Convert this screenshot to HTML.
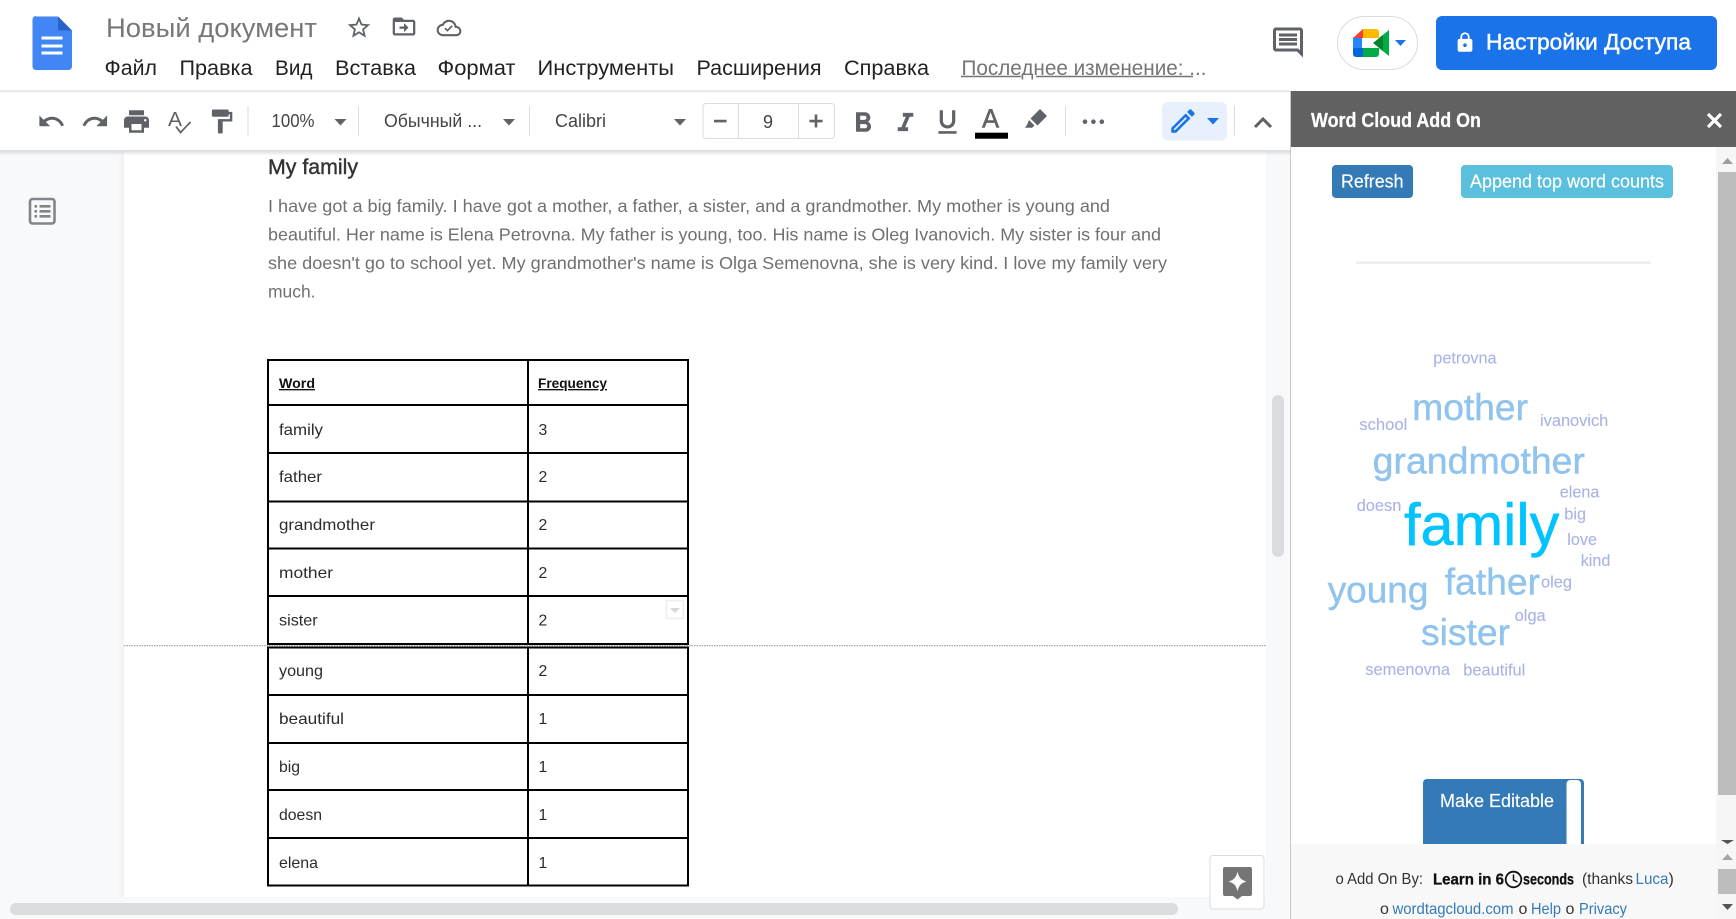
<!DOCTYPE html>
<html lang="ru">
<head>
<meta charset="utf-8">
<title>Новый документ</title>
<style>
html,body{margin:0;padding:0;width:1736px;height:919px;overflow:hidden;background:#fff}
svg{display:block}
text{font-family:"Liberation Sans",Arial,sans-serif;white-space:pre}
.i{fill:#5f6368}
</style>
</head>
<body>
<svg xmlns="http://www.w3.org/2000/svg" width="1736" height="919" viewBox="0 0 1736 919">
<defs>
<linearGradient id="sh" x1="0" y1="0" x2="0" y2="1"><stop offset="0" stop-color="#d8d9db"/><stop offset="1" stop-color="#d8d9db" stop-opacity="0"/></linearGradient>
<linearGradient id="shl" x1="0" y1="0" x2="1" y2="0"><stop offset="0" stop-color="#000" stop-opacity="0"/><stop offset="1" stop-color="#000" stop-opacity=".035"/></linearGradient>
</defs>

<!-- canvas background -->
<rect x="0" y="150" width="1291" height="769" fill="#f8f9fa"/>
<rect x="118" y="150" width="6" height="747" fill="url(#shl)"/>
<rect x="124" y="150" width="1142" height="747" fill="#fff"/>

<!-- document -->
<text x="268" y="174" font-size="21" fill="#333" stroke="#333" stroke-width=".4" textLength="90" lengthAdjust="spacingAndGlyphs">My family</text>
<g font-size="17.6" fill="#707070">
<text x="268" y="212" textLength="842" lengthAdjust="spacingAndGlyphs">I have got a big family. I have got a mother, a father, a sister, and a grandmother. My mother is young and</text>
<text x="268" y="240.5" textLength="893" lengthAdjust="spacingAndGlyphs">beautiful. Her name is Elena Petrovna. My father is young, too. His name is Oleg Ivanovich. My sister is four and</text>
<text x="268" y="269" textLength="899" lengthAdjust="spacingAndGlyphs">she doesn't go to school yet. My grandmother's name is Olga Semenovna, she is very kind. I love my family very</text>
<text x="268" y="297.5" textLength="47.5" lengthAdjust="spacingAndGlyphs">much.</text>
</g>

<!-- table -->
<g fill="none" stroke="#000" stroke-width="2">
<rect x="268" y="360" width="420" height="284"/>
<path d="M528 360V644M268 405H688M268 453H688M268 501.5H688M268 548.5H688M268 596H688"/>
<rect x="268" y="647.5" width="420" height="238"/>
<path d="M528 647.5V885.5M268 695H688M268 743H688M268 790H688M268 838H688"/>
</g>
<line x1="124" y1="645.7" x2="1266" y2="645.7" stroke="#9a9a9a" stroke-width="1.2" stroke-dasharray="1.5 1"/>
<g font-size="15.8" fill="#2c2c2c">
<text x="279" y="388" font-weight="700" font-size="13.5" fill="#111" text-decoration="underline" textLength="36" lengthAdjust="spacingAndGlyphs">Word</text>
<text x="538" y="388" font-weight="700" font-size="13.5" fill="#111" text-decoration="underline" textLength="69" lengthAdjust="spacingAndGlyphs">Frequency</text>
<text x="279" y="435" textLength="44" lengthAdjust="spacingAndGlyphs">family</text>
<text x="279" y="482" textLength="43" lengthAdjust="spacingAndGlyphs">father</text>
<text x="279" y="530" textLength="96" lengthAdjust="spacingAndGlyphs">grandmother</text>
<text x="279" y="578" textLength="54" lengthAdjust="spacingAndGlyphs">mother</text>
<text x="279" y="625.5" textLength="38.7" lengthAdjust="spacingAndGlyphs">sister</text>
<text x="279" y="676" textLength="44" lengthAdjust="spacingAndGlyphs">young</text>
<text x="279" y="724" textLength="65" lengthAdjust="spacingAndGlyphs">beautiful</text>
<text x="279" y="772" textLength="21" lengthAdjust="spacingAndGlyphs">big</text>
<text x="279" y="820" textLength="43" lengthAdjust="spacingAndGlyphs">doesn</text>
<text x="279" y="868" textLength="39" lengthAdjust="spacingAndGlyphs">elena</text>
<text x="538.5" y="435">3</text><text x="538.5" y="482">2</text><text x="538.5" y="530">2</text><text x="538.5" y="578">2</text><text x="538.5" y="625.5">2</text><text x="538.5" y="676">2</text><text x="538.5" y="724">1</text><text x="538.5" y="772">1</text><text x="538.5" y="820">1</text><text x="538.5" y="868">1</text>
</g>
<rect x="666.5" y="600.5" width="17" height="18" fill="#fff" stroke="#eee" stroke-width="1.5" rx="1"/>
<path d="M670 608h10l-5 5z" fill="#d8d8d8"/>

<!-- outline icon -->
<rect x="30" y="199" width="24.5" height="24.5" rx="2.5" fill="none" stroke="#80868b" stroke-width="2.6"/>
<path d="M34.5 205h2.6v2.6h-2.6zM34.5 210h2.6v2.6h-2.6zM34.5 215h2.6v2.6h-2.6zM39.5 205h11v2.6h-11zM39.5 210h11v2.6h-11zM39.5 215h11v2.6h-11z" fill="#80868b"/>

<!-- doc scrollbars -->
<rect x="1272" y="395" width="12" height="162" rx="6" fill="#dadce0"/>
<rect x="0" y="902.7" width="1291" height="16.3" fill="#f8f9fa"/>
<rect x="10" y="903" width="1168" height="12" rx="6" fill="#dadce0"/>

<!-- explore button -->
<rect x="1210" y="855.5" width="54" height="53.5" rx="3" fill="#fff" stroke="#dcdcdc"/>
<path d="M1225 867h25a2 2 0 0 1 2 2v25a2 2 0 0 1-2 2h-8l-4.500 3.500-4.500-3.500h-8a2 2 0 0 1-2-2v-25a2 2 0 0 1 2-2z" fill="#757575"/>
<path d="M1237.500 871.500c1 5.500 3.500 8.500 9 10-5.500 1.500-8 4.500-9 10-1-5.500-3.500-8.500-9-10 5.500-1.500 8-4.500 9-10z" fill="#fff"/>

<!-- top header -->
<rect x="0" y="0" width="1736" height="91" fill="#fff"/>
<path d="M36 16.500h22l14 14v36a3.500 3.500 0 0 1-3.500 3.500h-32.500a3.500 3.500 0 0 1-3.500-3.500v-47a3.500 3.500 0 0 1 3.500-3.500z" fill="#4285f4"/>
<path d="M58 16.500l14 14h-14z" fill="#2a63c7"/>
<path d="M41.500 36.500h21v3h-21zM41.500 44.500h21v3h-21zM41.500 51.500h21v3h-21z" fill="#fff"/>

<text x="106" y="37" font-size="27" fill="#777" textLength="211" lengthAdjust="spacingAndGlyphs">Новый документ</text>
<g class="i">
<path transform="translate(359 27.500) scale(1.12) translate(-12 -12)" d="M22 9.240l-7.190-.620L12 2 9.190 8.630 2 9.240l5.460 4.730L5.820 21 12 17.270 18.180 21l-1.630-7.030L22 9.240zM12 15.400l-3.760 2.270 1-4.280-3.320-2.880 4.380-.380L12 6.100l1.710 4.040 4.380.380-3.320 2.880 1 4.280L12 15.400z"/>
<path transform="translate(404 26.500) scale(1.13) translate(-12 -12)" d="M20 6h-8l-2-2H4c-1.100 0-2 .9-2 2v12c0 1.100.9 2 2 2h16c1.100 0 2-.9 2-2V8c0-1.100-.9-2-2-2zm0 12H4V8h16v10zM12 17l4-4-4-4v3H8v2h4z"/>
<path transform="translate(449 28) scale(1.03) translate(-12 -12)" d="M19.350 10.040C18.670 6.590 15.640 4 12 4 9.110 4 6.600 5.640 5.350 8.040 2.340 8.360 0 10.910 0 14c0 3.310 2.690 6 6 6h13c2.760 0 5-2.240 5-5 0-2.640-2.050-4.780-4.650-4.960zM19 18H6c-2.210 0-4-1.790-4-4 0-2.050 1.530-3.760 3.560-3.970l1.070-.110.500-.950C8.080 7.140 9.940 6 12 6c2.620 0 4.880 1.860 5.390 4.430l.3 1.500 1.530.110c1.560.1 2.780 1.410 2.780 2.960 0 1.650-1.350 3-3 3zm-8.500-2.300l-3-3 1.200-1.200 1.800 1.800 4-4 1.200 1.200z"/>
</g>

<g font-size="21" fill="#222">
<text x="104.500" y="75" textLength="52.500" lengthAdjust="spacingAndGlyphs">Файл</text>
<text x="179.500" y="75" textLength="73" lengthAdjust="spacingAndGlyphs">Правка</text>
<text x="275" y="75" textLength="37.500" lengthAdjust="spacingAndGlyphs">Вид</text>
<text x="335" y="75" textLength="81" lengthAdjust="spacingAndGlyphs">Вставка</text>
<text x="437.500" y="75" textLength="78" lengthAdjust="spacingAndGlyphs">Формат</text>
<text x="537.500" y="75" textLength="136.500" lengthAdjust="spacingAndGlyphs">Инструменты</text>
<text x="696.500" y="75" textLength="125" lengthAdjust="spacingAndGlyphs">Расширения</text>
<text x="844" y="75" textLength="85" lengthAdjust="spacingAndGlyphs">Справка</text>
<text x="961.500" y="75" fill="#757575" textLength="245" lengthAdjust="spacingAndGlyphs">Последнее изменение: ...</text>
</g>
<path d="M961 76.500h60M1036 76.500h157" stroke="#757575" stroke-width="1.600" fill="none"/>

<!-- comments -->
<path class="i" transform="translate(1288 42.500) scale(1.5) translate(-12 -12)" d="M22 4c0-1.100-.9-2-2-2H4c-1.100 0-2 .9-2 2v12c0 1.100.9 2 2 2h14l4 4V4zm-2 0v13.170L18.830 16H4V4h16zM6 12h12v2H6zm0-3h12v2H6zm0-3h12v2H6z"/>

<!-- meet -->
<rect x="1337.500" y="16.500" width="80" height="53" rx="26.500" fill="#fff" stroke="#dadce0"/>
<g transform="translate(1353 29)">
<path d="M10 0H23a3 3 0 0 1 3 3V9H10z" fill="#ffba00"/>
<path d="M10 0V9H0z" fill="#ea4335"/>
<path d="M0 9H10V19H0z" fill="#2684fc"/>
<path d="M0 19H10V28H3a3 3 0 0 1-3-3z" fill="#0066da"/>
<path d="M10 19H26V25a3 3 0 0 1-3 3H10z" fill="#00ac47"/>
<path d="M26 9L36 1V27L26 19z" fill="#00ac47"/>
<path d="M20 14L30 6V22z" fill="#00832d"/>
<path d="M9 9H20V19H9z" fill="#fff"/>
</g>
<path d="M1395 40h11l-5.500 6z" fill="#1a73e8"/>

<!-- share -->
<rect x="1436" y="16" width="281" height="54" rx="6" fill="#1a73e8"/>
<path fill="#fff" transform="translate(1465 42.500) scale(.92) translate(-12 -12)" d="M18 8h-1V6c0-2.760-2.240-5-5-5S7 3.240 7 6v2H6c-1.100 0-2 .9-2 2v10c0 1.100.9 2 2 2h12c1.100 0 2-.9 2-2V10c0-1.100-.9-2-2-2zm-6 9c-1.100 0-2-.9-2-2s.9-2 2-2 2 .9 2 2-.9 2-2 2zm3.100-9H8.900V6c0-1.710 1.390-3.100 3.100-3.100 1.710 0 3.100 1.390 3.100 3.100v2z"/>
<text x="1486" y="49.500" font-size="22" fill="#fff" stroke="#fff" stroke-width=".45" textLength="205" lengthAdjust="spacingAndGlyphs">Настройки Доступа</text>

<!-- toolbar -->
<rect x="0" y="150" width="1291" height="6" fill="url(#sh)"/>
<rect x="0" y="91" width="1291" height="59" fill="#fff"/>
<rect x="0" y="90.500" width="1291" height="1.200" fill="#dadce0"/>
<g class="i">
<path transform="translate(52 121.500) scale(1.2) translate(-12.500 -12)" d="M12.500 8c-2.650 0-5.050.99-6.900 2.600L2 7v9h9l-3.620-3.620c1.390-1.160 3.160-1.880 5.120-1.880 3.540 0 6.550 2.310 7.600 5.500l2.370-.78C21.080 11.030 17.150 8 12.500 8z"/>
<path transform="translate(94.500 121.500) scale(1.2) translate(-11.500 -12)" d="M18.400 10.600C16.550 8.990 14.150 8 11.500 8c-4.650 0-8.580 3.030-9.960 7.220L3.900 16c1.050-3.190 4.050-5.500 7.600-5.500 1.950 0 3.730.72 5.120 1.880L13 16h9V7l-3.600 3.600z"/>
<path transform="translate(136.500 121.500) scale(1.25) translate(-12 -12)" d="M19 8H5c-1.660 0-3 1.340-3 3v6h4v4h12v-4h4v-6c0-1.660-1.340-3-3-3zm-3 11H8v-5h8v5zm3-7c-.55 0-1-.45-1-1s.45-1 1-1 1 .45 1 1-.45 1-1 1zm-1-9H6v4h12V3z"/>
<path transform="translate(221.500 121.500) scale(1.2) translate(-12 -12)" d="M18 4V3c0-.55-.45-1-1-1H5c-.55 0-1 .45-1 1v4c0 .55.45 1 1 1h12c.55 0 1-.45 1-1V6h1v4H9v11c0 .55.45 1 1 1h2c.55 0 1-.45 1-1v-9h8V4h-3z"/>
</g>
<!-- spellcheck -->
<text x="168" y="126" font-size="20" fill="#5f6368" textLength="14" lengthAdjust="spacingAndGlyphs">A</text>
<path d="M176 126.500l4.500 6 10-10.500" fill="none" stroke="#5f6368" stroke-width="1.700"/>

<path d="M248 106V136M358.500 106V136M529.500 106V136M1065.500 106V136M1234.500 106V136" stroke="#dadce0" stroke-width="1"/>
<g font-size="18.500" fill="#444">
<text x="271.500" y="127" textLength="43" lengthAdjust="spacingAndGlyphs">100%</text>
<text x="384" y="127" textLength="98" lengthAdjust="spacingAndGlyphs">Обычный ...</text>
<text x="555" y="127" textLength="51" lengthAdjust="spacingAndGlyphs">Calibri</text>
</g>
<path d="M334.500 119h12l-6 6.500zM503 119h12l-6 6.500zM674 119h12l-6 6.500z" fill="#5f6368"/>

<!-- font size -->
<rect x="703" y="103.500" width="131.500" height="35" rx="3" fill="#fff" stroke="#dadce0"/>
<path d="M738.500 103.500V138.500M798.500 103.500V138.500" stroke="#dadce0"/>
<path d="M714 119.800h12.500v2.600H714zM809.500 119.800h13v2.600h-13zM814.700 114.500h2.600v13h-2.600z" fill="#5f6368"/>
<text x="768" y="128" font-size="18" fill="#444" text-anchor="middle">9</text>

<!-- formatting -->
<g class="i">
<path transform="translate(863 122) scale(1.4) translate(-12 -11)" d="M15.600 10.790c.97-.67 1.650-1.770 1.650-2.790 0-2.260-1.750-4-4-4H7v14h7.040c2.090 0 3.710-1.700 3.710-3.790 0-1.520-.86-2.820-2.150-3.420zM10 6.500h3c.83 0 1.500.67 1.500 1.500s-.67 1.500-1.500 1.500h-3v-3zm3.500 9H10v-3h3.500c.83 0 1.500.67 1.500 1.500s-.67 1.500-1.500 1.500z"/>
<path transform="translate(905.500 122) scale(1.3) translate(-12 -11)" d="M10 4v3h2.210l-3.420 8H6v3h8v-3h-2.210l3.420-8H18V4z"/>
<path transform="translate(947.500 122) scale(1.3) translate(-12 -12)" d="M12 17c3.310 0 6-2.690 6-6V3h-2.500v8c0 1.930-1.570 3.500-3.500 3.500S8.500 12.930 8.500 11V3H6v8c0 3.310 2.690 6 6 6zm-7 2v2h14v-2H5z"/>
<path d="M989 109h3.200l7.300 18.700h-3.100l-1.800-4.800h-8l-1.800 4.800h-3.100zm-1.400 11.300h6l-3-8z" fill-rule="evenodd"/>
</g>
<rect x="975" y="132.700" width="33" height="6" fill="#000"/>
<path class="i" d="M1040 109l7 7-9.500 9.500-7-7zM1029 120l5.500 5.500-2.500 2.300-7 0 2.300-3.500z"/>
<circle cx="1085" cy="121.700" r="2.300" fill="#5f6368"/><circle cx="1093.400" cy="121.700" r="2.300" fill="#5f6368"/><circle cx="1101.800" cy="121.700" r="2.300" fill="#5f6368"/>

<!-- pencil -->
<rect x="1162" y="102" width="65" height="38.500" rx="6" fill="#e8f0fe"/>
<path fill="#1a73e8" transform="translate(1183 121) scale(1.3) translate(-12 -12)" d="M3 17.250V21h3.750L17.810 9.940l-3.750-3.750L3 17.250zM5.920 19H5v-.92l9.060-9.060.92.92L5.920 19zM20.710 5.630l-2.340-2.340c-.2-.2-.45-.29-.71-.29s-.51.1-.7.29l-1.830 1.830 3.750 3.750 1.830-1.830c.39-.39.39-1.020 0-1.410z"/>
<path d="M1207 118h12l-6 6.500z" fill="#1a73e8"/>
<path d="M1255 127l8-8 8 8" fill="none" stroke="#5f6368" stroke-width="3"/>

<!-- side panel -->
<rect x="1291" y="147" width="445" height="772" fill="#fff"/>
<rect x="1290" y="91" width="1" height="828" fill="#c9c9c9"/>
<rect x="1291" y="91" width="445" height="56" fill="#616161"/>
<text x="1311" y="127" font-size="20.500" font-weight="700" fill="#fff" stroke="#fff" stroke-width=".25" textLength="170" lengthAdjust="spacingAndGlyphs">Word Cloud Add On</text>
<path d="M1708 114l13 13M1721 114l-13 13" stroke="#fff" stroke-width="3.200" fill="none"/>

<!-- panel buttons -->
<rect x="1332" y="165" width="81" height="33" rx="4" fill="#337ab7"/>
<text x="1341" y="187.500" font-size="18" fill="#fff" stroke="#fff" stroke-width=".15" textLength="62.500" lengthAdjust="spacingAndGlyphs">Refresh</text>
<rect x="1461" y="165" width="212" height="33" rx="4" fill="#5bc0de"/>
<text x="1470" y="187.500" font-size="18" fill="#fff" stroke="#fff" stroke-width=".15" textLength="194" lengthAdjust="spacingAndGlyphs">Append top word counts</text>
<rect x="1356" y="261.500" width="295" height="2.500" fill="#eee"/>

<!-- word cloud -->
<g fill="#a9b3e6" font-size="16.300" stroke="#a9b3e6" stroke-width=".12">
<text x="1433.300" y="363.500" textLength="63.300" lengthAdjust="spacingAndGlyphs">petrovna</text>
<text x="1359.300" y="430" textLength="48" lengthAdjust="spacingAndGlyphs">school</text>
<text x="1540" y="426" textLength="68.300" lengthAdjust="spacingAndGlyphs">ivanovich</text>
<text x="1559.700" y="497.700" textLength="39.700" lengthAdjust="spacingAndGlyphs">elena</text>
<text x="1356.700" y="511" textLength="44.700" lengthAdjust="spacingAndGlyphs">doesn</text>
<text x="1564.300" y="519.300" textLength="21.700" lengthAdjust="spacingAndGlyphs">big</text>
<text x="1567.300" y="545" textLength="29.700" lengthAdjust="spacingAndGlyphs">love</text>
<text x="1580.700" y="566" textLength="29.700" lengthAdjust="spacingAndGlyphs">kind</text>
<text x="1541" y="587.700" textLength="31" lengthAdjust="spacingAndGlyphs">oleg</text>
<text x="1514.700" y="621" textLength="31" lengthAdjust="spacingAndGlyphs">olga</text>
<text x="1365.300" y="675" textLength="84.700" lengthAdjust="spacingAndGlyphs">semenovna</text>
<text x="1463.300" y="675.700" textLength="62" lengthAdjust="spacingAndGlyphs">beautiful</text>
</g>
<g fill="#90c3ee" font-size="37.300" stroke="#90c3ee" stroke-width=".45">
<text x="1412.300" y="420" textLength="115.700" lengthAdjust="spacingAndGlyphs">mother</text>
<text x="1372.700" y="473.300" textLength="212.300" lengthAdjust="spacingAndGlyphs">grandmother</text>
<text x="1327.700" y="602.300" textLength="100.700" lengthAdjust="spacingAndGlyphs">young</text>
<text x="1444.700" y="594.300" textLength="95.300" lengthAdjust="spacingAndGlyphs">father</text>
<text x="1421" y="645" textLength="89" lengthAdjust="spacingAndGlyphs">sister</text>
</g>
<text x="1404" y="545" font-size="59.500" fill="#00c3ff" stroke="#00c3ff" stroke-width=".5" textLength="155.300" lengthAdjust="spacingAndGlyphs">family</text>

<!-- make editable -->
<path d="M1423 844V783a4 4 0 0 1 4-4H1580a4 4 0 0 1 4 4V844z" fill="#337ab7"/>
<path d="M1566.500 844V784a4 4 0 0 1 4-4H1577a4 4 0 0 1 4 4V844z" fill="#fff"/>
<text x="1440" y="807" font-size="18" fill="#fff" stroke="#fff" stroke-width=".15" textLength="114" lengthAdjust="spacingAndGlyphs">Make Editable</text>

<!-- footer -->
<rect x="1291" y="844" width="425" height="75" fill="#f8f8f8"/>
<g font-size="16" fill="#333">
<text x="1335.500" y="884" textLength="87.500" lengthAdjust="spacingAndGlyphs">o Add On By:</text>
<text x="1582" y="884" textLength="51" lengthAdjust="spacingAndGlyphs">(thanks</text>
<text x="1635.500" y="884" fill="#337ab7" textLength="33" lengthAdjust="spacingAndGlyphs">Luca</text>
<text x="1668.500" y="884" textLength="5">)</text>
<text x="1380" y="914">o</text>
<text x="1392.500" y="914" fill="#337ab7" textLength="121" lengthAdjust="spacingAndGlyphs">wordtagcloud.com</text>
<text x="1518.500" y="914">o</text>
<text x="1531" y="914" fill="#337ab7" textLength="30" lengthAdjust="spacingAndGlyphs">Help</text>
<text x="1565.500" y="914">o</text>
<text x="1579" y="914" fill="#337ab7" textLength="48" lengthAdjust="spacingAndGlyphs">Privacy</text>
</g>
<g font-size="15.500" font-weight="700" fill="#111">
<text x="1433" y="884.500" textLength="71" lengthAdjust="spacingAndGlyphs" stroke="#111" stroke-width=".3">Learn in 6</text>
<text x="1523" y="884.500" textLength="51" lengthAdjust="spacingAndGlyphs" stroke="#111" stroke-width=".3">seconds</text>
</g>
<circle cx="1513.500" cy="879.500" r="7.800" fill="none" stroke="#111" stroke-width="1.800"/>
<path d="M1513.500 874.500v5.500l4 2" fill="none" stroke="#111" stroke-width="1.500"/>

<!-- panel scrollbars -->
<rect x="1716" y="147" width="20" height="697" fill="#f6f6f6"/>
<rect x="1718" y="172" width="18" height="623" fill="#bdbdbd"/>
<path d="M1722 164l5.500-6 5.500 6z" fill="#9e9e9e"/>
<path d="M1721 840h13l-6.500 4z" fill="#555"/>
<rect x="1716" y="844" width="20" height="75" fill="#f6f6f6"/>
<path d="M1722 860l5.500-6 5.500 6z" fill="#a5a5a5"/>
<rect x="1718" y="869" width="18" height="25" fill="#bdbdbd"/>
<path d="M1722 904l5.500 6 5.500-6z" fill="#555"/>
</svg>
</body>
</html>
